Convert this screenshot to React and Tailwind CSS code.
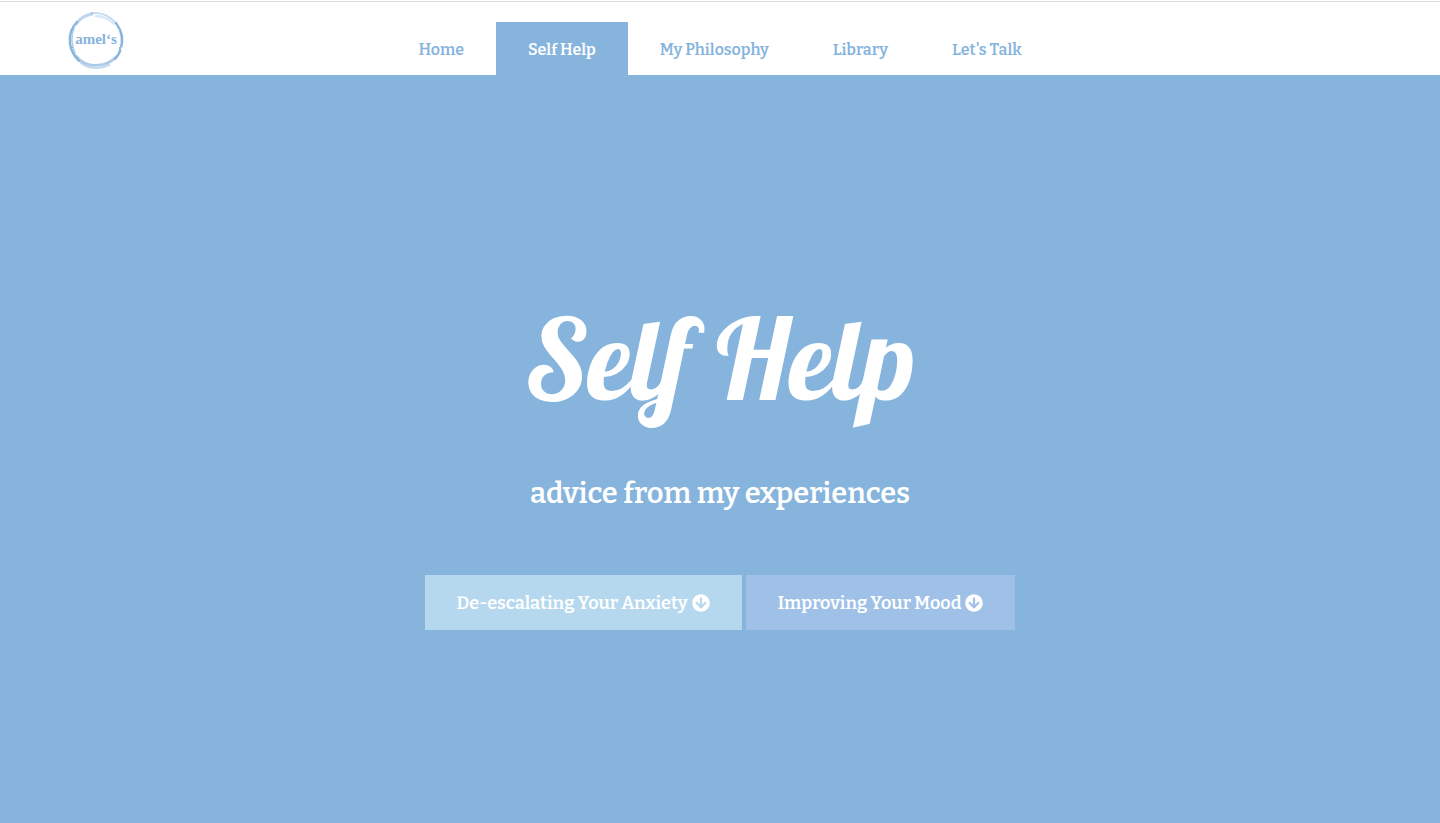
import { FaArrowCircleDown } from "react-icons/fa";

const links = ["Home", "Self Help", "My Philosophy", "Library", "Let's Talk"];

function Logo() {
  return (
    <a href="#home" aria-label="amel's home" className="block">
      <svg viewBox="0 0 56 58" className="h-[58px] w-14 overflow-visible" fill="none">
        <filter id="brush" x="-10%" y="-10%" width="120%" height="120%">
          <feTurbulence type="fractalNoise" baseFrequency="0.12" numOctaves="1" seed="4" />
          <feDisplacementMap in="SourceGraphic" scale="2" xChannelSelector="R" yChannelSelector="G" />
        </filter>
        <g stroke="#86b4dd" strokeLinecap="round" filter="url(#brush)">
          <path d="M9 11C3 17 1 25 2 33c1 7 4 12 9 17" strokeWidth="2.2" />
          <path d="M6 17C3 24 3 34 7 42" strokeWidth="1.8" opacity=".6" />
          <path d="M8 45c6 7 14 10 22 9 8 0 14-4 18-8" strokeWidth="2.6" opacity=".7" />
          <path d="M13 52c8 6 20 6 28 2" strokeWidth="2.2" opacity=".5" />
          <path d="M47 48c6-6 8-16 7-23-1-5-3-9-6-13" strokeWidth="2.2" />
          <path d="M52 20c2 8 2 15-1 21" strokeWidth="1.6" opacity=".6" />
          <path d="M8 13C12 7 18 4 24 3" strokeWidth="3.2" opacity=".55" />
          <path d="M23 2c10-1 19 3 25 10" strokeWidth="1.6" opacity=".5" />
          <path d="M28 5c7 0 13 3 18 8" strokeWidth="2.4" opacity=".3" />
        </g>
        <text
          x="28"
          y="33"
          textAnchor="middle"
          fill="#86b4dd"
          className="font-['Palatino','Liberation_Serif',serif] text-[15px] font-bold"
        >
          amel‘s
        </text>
      </svg>
    </a>
  );
}

export default function App() {
  return (
    <div className="flex min-h-screen flex-col bg-[#86b4dd] font-['Roboto_Slab','Bitter','DejaVu_Serif_Condensed','DejaVu_Serif',serif] font-semibold">
      <header className="mt-px grid grid-cols-[1fr_auto_1fr] border-t border-[#d9dcdd] bg-white shadow-[0_-1px_0_#fff]">
        <div className="pt-[9px] pl-[68px]">
          <Logo />
        </div>
        <nav className="flex items-end pt-5">
          {links.map((label) => (
            <a
              key={label}
              href="#"
              aria-current={label === "Self Help" ? "page" : undefined}
              className={`flex h-[53px] items-center px-8 pt-0.5 text-base ${
                label === "Self Help" ? "bg-[#86b4dd] text-white" : "text-[#86b4dd]"
              }`}
            >
              {label}
            </a>
          ))}
        </nav>
      </header>
      <main className="flex flex-1 flex-col items-center justify-center text-white">
        <h1 className="font-['Lobster','Liberation_Serif',serif] text-[112px] leading-[180px] font-normal">
          Self Help
        </h1>
        <p className="mt-[26px] text-[29px] leading-10">advice from my experiences</p>
        <div className="mt-[61px] flex gap-1 text-lg">
          <a href="#anxiety" className="flex h-[55px] items-center gap-1 bg-[#b6d8ef] px-8">
            De-escalating Your Anxiety <FaArrowCircleDown />
          </a>
          <a href="#mood" className="flex h-[55px] items-center gap-1 bg-[#9fc1e7] px-8">
            Improving Your Mood <FaArrowCircleDown />
          </a>
        </div>
      </main>
    </div>
  );
}
